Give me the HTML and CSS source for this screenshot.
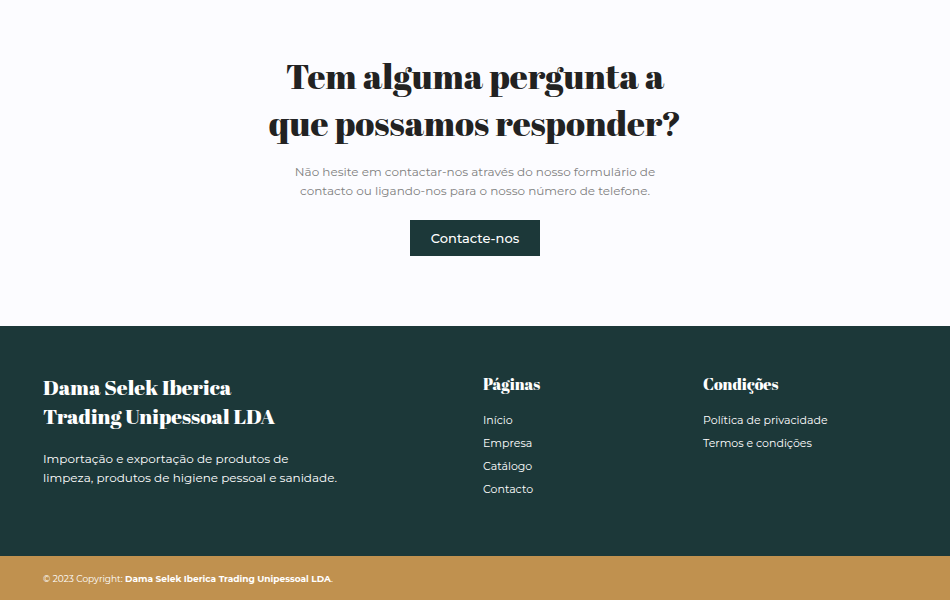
FILE: index.html
```html
<!DOCTYPE html>
<html lang="pt">
<head>
<meta charset="utf-8">
<meta name="viewport" content="width=device-width, initial-scale=1">
<title>Dama Selek Iberica</title>
<link rel="stylesheet" href="styles.css">
</head>
<body>
<main class="cta">
  <h2 class="cta-title">Tem alguma pergunta a<br>que possamos responder?</h2>
  <p class="cta-text">Não hesite em contactar-nos através do nosso formulário de<br>contacto ou ligando-nos para o nosso número de telefone.</p>
  <a class="button" href="#contacto">Contacte-nos</a>
</main>
<footer>
  <div class="footer-main">
    <section class="brand">
      <h3 class="brand-title">Dama Selek Iberica<br>Trading Unipessoal LDA</h3>
      <p class="brand-text">Importação e exportação de produtos de<br>limpeza, produtos de higiene pessoal e sanidade.</p>
    </section>
    <nav aria-label="Páginas">
      <h4 class="nav-title">Páginas</h4>
      <ul class="links">
        <li><a href="#inicio">Início</a></li>
        <li><a href="#empresa">Empresa</a></li>
        <li><a href="#catalogo">Catálogo</a></li>
        <li><a href="#contacto">Contacto</a></li>
      </ul>
    </nav>
    <nav aria-label="Condições">
      <h4 class="nav-title">Condições</h4>
      <ul class="links">
        <li><a href="#privacidade">Política de privacidade</a></li>
        <li><a href="#termos">Termos e condições</a></li>
      </ul>
    </nav>
  </div>
  <p class="copyright">© 2023 Copyright: <strong>Dama Selek Iberica Trading Unipessoal LDA</strong>.</p>
</footer>
</body>
</html>
```
FILE: styles.css
```css
* { box-sizing: border-box; }

body {
  margin: 0;
  min-height: 100vh;
  background: #fcfcff;
  color: #fff;
  font-family: Montserrat, "Open Sans", sans-serif;
  font-size: 12px;
}

h2, h3, h4, p, ul { margin: 0; padding: 0; }

h2, h3, h4 {
  font-family: "Abril Fatface", "Liberation Serif", serif;
  font-weight: 400;
}

a { color: inherit; text-decoration: none; }

.cta {
  display: flex;
  flex-direction: column;
  align-items: center;
  padding: 52px 16px 70px;
  text-align: center;
}

.cta-title {
  color: #222;
  font-size: 35px;
  line-height: 47px;
}

.cta-text {
  margin: 16px 0 20px;
  color: #808080;
  line-height: 19px;
}

.button {
  padding: 0 21px;
  background: #1c3839;
  color: #fff;
  font-size: 13px;
  font-weight: 500;
  line-height: 36px;
}

.footer-main {
  display: grid;
  grid-template-columns: 2fr 1fr 1fr;
  padding: 47px 27px 55px 43px;
  background: #1c3839;
}

.brand-title {
  font-size: 21px;
  line-height: 29px;
}

.brand-text {
  margin-top: 18px;
  line-height: 19px;
}

.nav-title {
  font-size: 16px;
  line-height: 22px;
}

.links {
  margin-top: 14px;
  font-size: 11px;
  line-height: 23px;
  list-style: none;
}

.copyright {
  padding: 12px 43px;
  background: #c0914f;
  font-size: 9px;
  line-height: 22px;
}
```
